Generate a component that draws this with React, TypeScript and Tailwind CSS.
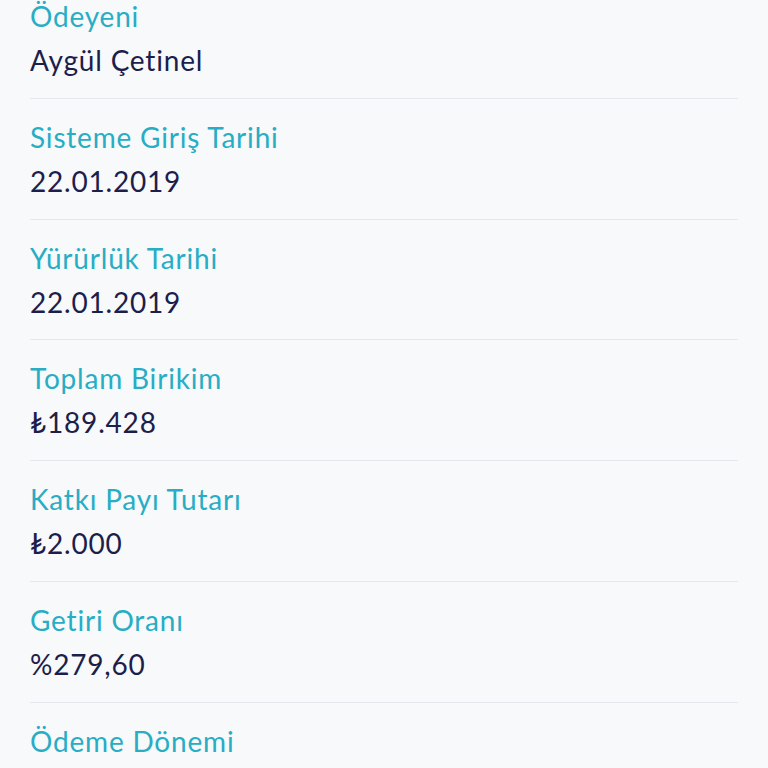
const rows = [
  { label: 'Ödeyeni', value: 'Aygül Çetinel' },
  { label: 'Sisteme Giriş Tarihi', value: '22.01.2019' },
  { label: 'Yürürlük Tarihi', value: '22.01.2019' },
  { label: 'Toplam Birikim', value: '₺189.428' },
  { label: 'Katkı Payı Tutarı', value: '₺2.000' },
  { label: 'Getiri Oranı', value: '%279,60' },
  { label: 'Ödeme Dönemi', value: '' },
];

export default function App() {
  return (
    <div
      className="h-[768px] w-[768px] overflow-hidden bg-[#f7f9fb] pl-[30px] pr-[30px]"
      style={{ fontFamily: 'Lato, "DejaVu Sans", sans-serif' }}
    >
      <div className="-mt-[22px] flex flex-col">
        {rows.map((row) => (
          <div key={row.label} className="border-b border-[#e4e7eb] pt-4 pb-[15.8px]">
            <div className="text-[28px] leading-[44px] tracking-[0.8px] text-[#27adc4]">{row.label}</div>
            <div className="h-[44px] text-[28px] leading-[44px] tracking-[0.8px] text-[#1c1e4c]">{row.value}</div>
          </div>
        ))}
      </div>
    </div>
  );
}
